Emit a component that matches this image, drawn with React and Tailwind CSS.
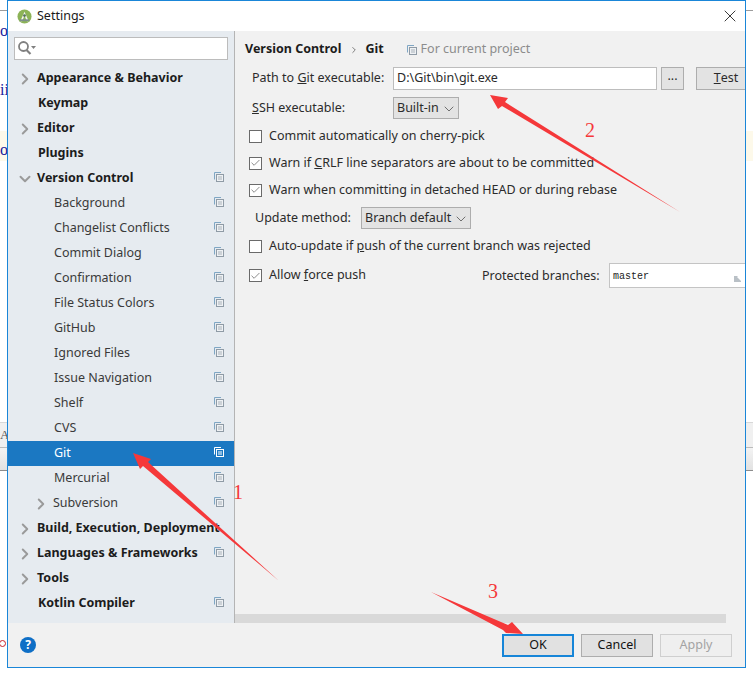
import { Check, ChevronDown, ChevronRight, X } from 'lucide-react';

const treeRows = [
  { label: 'Appearance & Behavior', bold: true, arrow: 'right' },
  { label: 'Keymap', bold: true },
  { label: 'Editor', bold: true, arrow: 'right' },
  { label: 'Plugins', bold: true },
  { label: 'Version Control', bold: true, arrow: 'down', copy: true },
  { label: 'Background', child: true, copy: true },
  { label: 'Changelist Conflicts', child: true, copy: true },
  { label: 'Commit Dialog', child: true, copy: true },
  { label: 'Confirmation', child: true, copy: true },
  { label: 'File Status Colors', child: true, copy: true },
  { label: 'GitHub', child: true, copy: true },
  { label: 'Ignored Files', child: true, copy: true },
  { label: 'Issue Navigation', child: true, copy: true },
  { label: 'Shelf', child: true, copy: true },
  { label: 'CVS', child: true, copy: true },
  { label: 'Git', child: true, copy: true, selected: true },
  { label: 'Mercurial', child: true, copy: true },
  { label: 'Subversion', nested: true, arrow: 'right', copy: true },
  { label: 'Build, Execution, Deployment', bold: true, arrow: 'right' },
  { label: 'Languages & Frameworks', bold: true, arrow: 'right', copy: true },
  { label: 'Tools', bold: true, arrow: 'right' },
  { label: 'Kotlin Compiler', bold: true, copy: true },
];

const CopyIcon = ({ light }) => (
  <svg width="10" height="10" viewBox="0 0 10 10" fill="none" className="shrink-0">
    <path d="M0.5 7.5V0.5H7" stroke={light ? '#ffffff' : '#7fa6c4'} />
    <rect x="2.5" y="2.5" width="7" height="7" stroke={light ? '#ffffff' : '#8f9ba6'} fill={light ? 'transparent' : '#eef1f4'} />
    <path d="M4 5H8M4 7H8" stroke={light ? '#ffffff' : '#a9b2ba'} />
  </svg>
);

const TreeRow = ({ row }) => {
  const text = row.selected ? 'text-white' : row.bold ? 'text-[#1c1c1c]' : 'text-[#3a3a3a]';
  let labelLeft = row.arrow ? 'w-[29px]' : 'w-[30px]';
  if (row.child) labelLeft = 'w-[46px]';
  if (row.nested) labelLeft = 'w-[45px]';

  return (
    <div className={`relative flex h-[25px] items-center ${row.selected ? 'bg-[#1b78c2]' : ''}`}>
      <div className={`shrink-0 ${labelLeft} ${row.nested ? 'pl-[24px]' : 'pl-[8px]'}`}>
        {row.arrow === 'right' && <ChevronRight size={18} strokeWidth={2.6} className="text-[#9a9a9a]" />}
        {row.arrow === 'down' && <ChevronDown size={18} strokeWidth={2.6} className="text-[#9a9a9a]" />}
      </div>
      <span className={`whitespace-nowrap text-[12.5px] ${row.bold ? 'font-bold' : ''} ${text}`}>{row.label}</span>
      {row.copy && (
        <div className="absolute right-[10px] top-[6px]">
          <CopyIcon light={row.selected} />
        </div>
      )}
    </div>
  );
};

const CheckRow = ({ checked, className, children }) => (
  <div className={`flex h-[18px] items-center pl-[14px] ${className}`}>
    <div className="flex h-[13px] w-[13px] shrink-0 items-center justify-center border border-[#6a6a6a] bg-white">
      {checked && <Check size={12} strokeWidth={1.4} className="text-[#4a4a4a]" />}
    </div>
    <span className="ml-[7px] whitespace-nowrap">{children}</span>
  </div>
);

const SelectBox = ({ className, children }) => (
  <div className={`flex h-[22px] items-center justify-between border border-[#adadad] bg-[#e3e3e3] pl-[3px] pr-[1px] pt-[1px] ${className}`}>
    <span className="whitespace-nowrap">{children}</span>
    <ChevronDown size={16} strokeWidth={1} className="text-[#333333]" />
  </div>
);

const Footer = () => (
  <div className="flex h-[44px] shrink-0 items-start justify-between bg-[#f1f1f1] pl-[12px] pr-[13px] pt-[11px] text-[12.5px]">
    <div className="mt-[3px] flex h-[16px] w-[16px] items-center justify-center rounded-full bg-[#0f6fc6] text-[12px] font-bold text-white">?</div>
    <div className="flex gap-[7px]">
      <button className="h-[23px] w-[72px] border-2 border-[#1685d8] bg-[#e1e1e1] text-[#111111]">OK</button>
      <button className="h-[23px] w-[72px] border border-[#adadad] bg-[#e1e1e1] text-[#111111]">Cancel</button>
      <button className="h-[23px] w-[72px] border border-[#cfcfcf] bg-[#efefef] text-[#a3a3a3]">Apply</button>
    </div>
  </div>
);

const GitPanel = () => (
  <div className="flex min-w-0 flex-1 flex-col overflow-hidden bg-[#f1f1f1] text-[12.5px] text-[#2b2b2b]">
    <div className="flex flex-1 flex-col">
      <div className="flex h-[34px] items-center pl-[10px] pt-[3px]">
        <span className="font-bold text-[#1c1c1c]">Version Control</span>
        <ChevronRight size={10} strokeWidth={1.6} className="ml-[8px] mr-[6px] text-[#444444]" />
        <span className="font-bold text-[#1c1c1c]">Git</span>
        <div className="ml-[23px] mr-[4px]"><CopyIcon /></div>
        <span className="text-[#8c8c8c]">For current project</span>
      </div>

      <div className="mt-[2px] flex h-[23px] items-center">
        <span className="w-[158px] shrink-0 whitespace-nowrap pl-[17px]">Path to <u>G</u>it executable:</span>
        <div className="flex h-[23px] w-[264px] shrink-0 items-center border border-[#bdbdbd] bg-white pl-[3px]">D:\Git\bin\git.exe</div>
        <div className="ml-[4px] flex h-[23px] w-[23px] shrink-0 items-center justify-center border border-[#adadad] bg-[#e3e3e3] pb-[4px]">...</div>
        <div className="ml-[12px] flex h-[23px] w-[60px] shrink-0 items-center justify-center border border-[#adadad] bg-[#e3e3e3]"><u>T</u>est</div>
      </div>

      <div className="mt-[7px] flex h-[22px] items-center">
        <span className="w-[158px] shrink-0 pl-[17px]"><u>S</u>SH executable:</span>
        <SelectBox className="w-[66px]">Built-in</SelectBox>
      </div>

      <CheckRow className="mt-[8px]">Commit automatically on cherry-pick</CheckRow>
      <CheckRow checked className="mt-[9px]">Warn if <u>C</u>RLF line separators are about to be committed</CheckRow>
      <CheckRow checked className="mt-[9px]">Warn when committing in detached HEAD or during rebase</CheckRow>

      <div className="mt-[8px] flex h-[22px] items-center pl-[20px]">
        <span className="w-[106px] shrink-0 whitespace-nowrap pt-[1px]">Update method:</span>
        <SelectBox className="w-[110px]">Branch default</SelectBox>
      </div>

      <CheckRow className="mt-[8px]">Auto-update if <u>p</u>ush of the current branch was rejected</CheckRow>

      <div className="mt-[8px] flex h-[25px] items-center">
        <CheckRow checked className="w-[247px] shrink-0">Allow <u>f</u>orce push</CheckRow>
        <span className="w-[127px] shrink-0 whitespace-nowrap pt-[1px]">Protected branches:</span>
        <div className="relative flex h-[25px] w-[140px] shrink-0 items-center border border-[#c4c4c4] bg-white pl-[3px] pt-[1px] font-['Liberation_Mono',monospace] text-[10px] text-[#222222]">
          master
          <svg width="7" height="7" viewBox="0 0 7 7" className="absolute right-[7px] bottom-[5px]">
            <path d="M0 1H4L3 2L7 6V7H0Z" fill="#b9c0c6" />
          </svg>
        </div>
      </div>
    </div>
    <div className="mr-[19px] h-[9px] shrink-0 bg-[#d9d9d9]" />
  </div>
);

const BehindWindow = () => (
  <div className="absolute inset-0 font-['Liberation_Serif',serif] text-[16px]">
    <div className="absolute left-0 top-[10px] h-[1px] w-full bg-[#9c9c9c]" />
    <div className="absolute left-0 top-[131px] h-[30px] w-full bg-[#fdf9ea]" />
    <span className="absolute left-0 top-[19px] text-[#1a1a9c]">oa</span>
    <span className="absolute left-0 top-[78px] text-[#1a1a9c]">ii</span>
    <span className="absolute left-0 top-[138px] text-[#1a1a9c]">ov</span>
    <div className="absolute left-0 top-[422px] h-[25px] w-full border-t border-[#d8d8d8] bg-[#f0f0f0]" />
    <span className="absolute left-0 top-[425px] text-[13px] text-[#555555]">At</span>
    <div className="absolute left-0 top-[447px] h-[24px] w-full border-b border-t border-b-[#8c8c8c] border-t-[#bbbbbb] bg-gradient-to-b from-[#f3f3f3] to-[#e2e2e2]" />
    <div className="absolute -left-[1px] top-[640px] h-[7px] w-[7px] rounded-full border border-[#c8202a]" />
  </div>
);

const Arrows = () => (
  <svg width="753" height="674" viewBox="0 0 753 674" className="pointer-events-none absolute left-0 top-0">
    <path d="M133 453L151 459L148 462L279 581L143 466L140 469Z" fill="#f5383a" />
    <path d="M490 95L508 98L505 102L680 212L502 106L498 109Z" fill="#f5383a" />
    <path d="M431 592L508 625L512 622L523 634L506 633L503 630Z" fill="#f5383a" />
  </svg>
);

const App = () => (
  <div className="relative h-[674px] w-[753px] overflow-hidden bg-white font-['Noto_Sans',sans-serif]">
    <BehindWindow />

    <div className="absolute left-[7px] top-0 flex h-[668px] w-[739px] flex-col border border-[#1a86d8] bg-white">
      <div className="flex h-[30px] shrink-0 items-center pl-[9px] pr-[5px] text-[12.5px] text-[#1a1a1a]">
        <svg width="15" height="15" viewBox="0 0 16 16" className="shrink-0">
          <circle cx="8" cy="8" r="7.5" fill="#8cb357" />
          <path d="M8 3L12.5 13H10.5L8 7L5.5 13H3.5Z" fill="#f4f4f4" />
          <rect x="3" y="11" width="10" height="2" fill="#7d8f8a" />
          <circle cx="8" cy="7" r="1.5" fill="#54705a" />
        </svg>
        <span className="ml-[5px]">Settings</span>
        <X size={20} strokeWidth={1} className="ml-auto text-[#111111]" />
      </div>

      <div className="flex min-h-0 flex-1">
        <div className="w-[227px] shrink-0 border-r border-[#b4b4b4] bg-[#e6ebf0]">
          <div className="pl-[6px] pr-[6px] pt-[6px]">
            <div className="flex h-[23px] items-center border border-[#bcbcbc] bg-white pl-[3px]">
              <svg width="18" height="15" viewBox="0 0 18 15">
                <circle cx="5.5" cy="5.5" r="4.5" fill="none" stroke="#808080" strokeWidth="1.8" />
                <path d="M8.5 9L12.5 13" stroke="#808080" strokeWidth="2.2" />
                <path d="M13 5H18L15.5 8Z" fill="#808080" />
              </svg>
            </div>
          </div>
          <div className="pt-[6px]">
            {treeRows.map((row) => (
              <TreeRow key={row.label} row={row} />
            ))}
          </div>
        </div>
        <GitPanel />
      </div>

      <Footer />
    </div>

    <Arrows />
    <span className="absolute left-[233px] top-[477px] font-['Liberation_Serif',serif] text-[20px] text-[#f5383a]">1</span>
    <span className="absolute left-[585px] top-[115px] font-['Liberation_Serif',serif] text-[20px] text-[#f5383a]">2</span>
    <span className="absolute left-[488px] top-[576px] font-['Liberation_Serif',serif] text-[20px] text-[#f5383a]">3</span>
  </div>
);

export default App;
